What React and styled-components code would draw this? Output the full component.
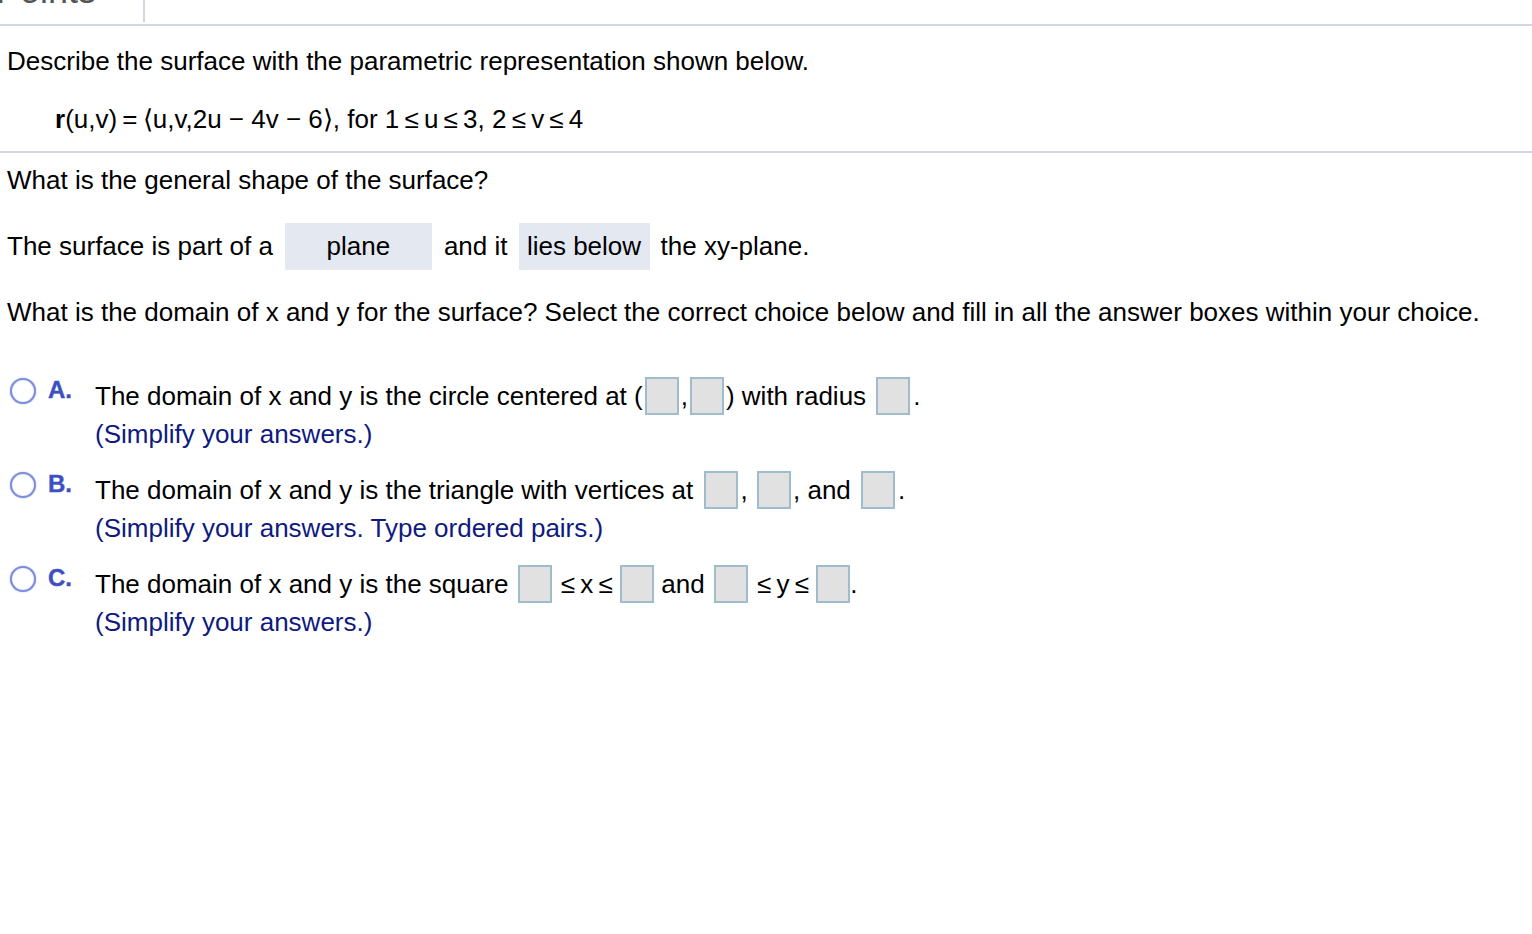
import React from 'react';
import styled, { createGlobalStyle } from 'styled-components';

const GlobalStyle = createGlobalStyle`
    body {
        margin: 0;
        background: #fff;
        font-family: "Liberation Sans", Arial, Helvetica, sans-serif;
        color: #000;
    }
`;

const Page = styled.div`
    width: 1532px;
    font-size: 26px;
`;

const TopBar = styled.div`
    height: 24px;
    border-bottom: 2px solid #d3d6e2;
    overflow: hidden;
    display: flex;
`;

const TopLabel = styled.div`
    width: 143px;
    height: 22px;
    border-right: 2px solid #d3d6e2;
    overflow: hidden;
    color: #555;
    font-size: 36px;
    line-height: 36px;
    & > span {
        display: block;
        margin-top: -27px;
        margin-left: -4px;
    }
`;

const Para = styled.p`
    margin: ${(p) => p.top || 0}px 0 0;
    padding-left: ${(p) => p.indent || 7}px;
    line-height: 30px;
    white-space: nowrap;
`;

const Divider = styled.div`
    margin-top: ${(p) => p.top || 0}px;
    border-top: 2px solid #d3d6e2;
`;

const Bold = styled.b`
    font-weight: 700;
`;

const DropRow = styled.div`
    margin-top: 28px;
    padding-left: 7px;
    display: flex;
    align-items: center;
    height: 47px;
    white-space: pre;
`;

const Drop = styled.span`
    display: inline-flex;
    align-items: center;
    justify-content: center;
    width: ${(p) => p.w}px;
    height: 47px;
    margin: 0 ${(p) => p.gap || 12}px;
    background: #e4e8f1;
`;

const Options = styled.div`
    margin-top: 50px;
    display: flex;
    flex-direction: column;
    gap: 18px;
`;

const Option = styled.div`
    display: grid;
    grid-template-columns: 38px 47px 1fr;
    padding-left: 10px;
`;

const Radio = styled.span`
    width: 22px;
    height: 22px;
    margin-top: 1px;
    border-radius: 50%;
    border: 2px solid #7d8fdc;
    box-shadow: 0 0 1.5px #9aa8e6, inset 0 0 1.5px #c2cbf0;
    background: #fff;
`;

const Letter = styled.span`
    font-weight: 700;
    font-size: 24px;
    color: #3c50c2;
    line-height: 26px;
    -webkit-text-stroke: 0.4px #3c50c2;
`;

const Lines = styled.div`
    line-height: 38px;
    white-space: nowrap;
`;

const Hint = styled.div`
    color: #0e1a80;
`;

const Box = styled.span`
    display: inline-block;
    box-sizing: border-box;
    width: 34px;
    height: 38px;
    vertical-align: middle;
    margin: -4px ${(p) => p.m ?? 2}px 0;
    background: #e1e1e1;
    border: 2px solid #9fbccd;
`;

const RadioOption = ({ letter, children, hint }) => (
    <Option>
        <Radio />
        <Letter>{letter}.</Letter>
        <Lines>
            <div>{children}</div>
            <Hint>{hint}</Hint>
        </Lines>
    </Option>
);

const App = () => (
    <Page>
        <GlobalStyle />
        <TopBar>
            <TopLabel><span>Points</span></TopLabel>
        </TopBar>
        <Para top={20}>Describe the surface with the parametric representation shown below.</Para>
        <Para top={28} indent={55}>
            <Bold>r</Bold>(u,v)&#8201;=&#8201;⟨u,v,2u − 4v − 6⟩, for 1&#8201;≤&#8201;u&#8201;≤&#8201;3, 2&#8201;≤&#8201;v&#8201;≤&#8201;4
        </Para>
        <Divider top={17} />
        <Para top={12}>What is the general shape of the surface?</Para>
        <DropRow>
            The surface is part of a<Drop w={147}>plane</Drop>and it<Drop w={131} gap={11}>lies below</Drop>the xy-plane.
        </DropRow>
        <Para top={27}>What is the domain of x and y for the surface? Select the correct choice below and fill in all the answer boxes within your choice.</Para>
        <Options>
            <RadioOption letter="A" hint="(Simplify your answers.)">
                The domain of x and y is the circle centered at (<Box />,<Box />) with radius <Box m={3} />.
            </RadioOption>
            <RadioOption letter="B" hint="(Simplify your answers. Type ordered pairs.)">
                The domain of x and y is the triangle with vertices at <Box m={3} />, <Box m={2} />, and <Box m={3} />.
            </RadioOption>
            <RadioOption letter="C" hint="(Simplify your answers.)">
                The domain of x and y is the square <Box m={2} /> ≤&#8201;x&#8201;≤ <Box m={0} /> and <Box m={2} /> ≤&#8201;y&#8201;≤ <Box m={0} />.
            </RadioOption>
        </Options>
    </Page>
);

export default App;
